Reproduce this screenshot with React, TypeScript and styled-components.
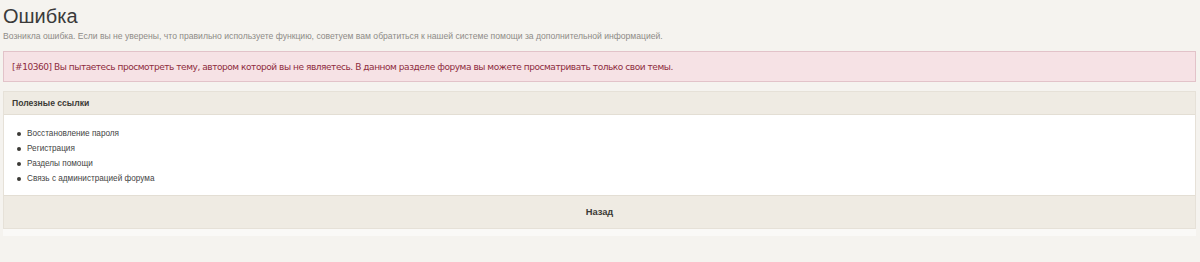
import React from 'react'
import styled, { createGlobalStyle } from 'styled-components'

const GlobalStyle = createGlobalStyle`
  html, body {
    margin: 0;
    padding: 0;
    background: #f5f3ef;
  }
  body {
    font-family: 'Liberation Sans', Arial, sans-serif;
  }
`

const Page = styled.div`
  padding: 4px 4px 0 3px;
`

const Title = styled.h1`
  margin: 0;
  font-size: 20px;
  font-weight: normal;
  line-height: 24px;
  color: #3a3a3a;
`

const Subtitle = styled.p`
  margin: 2px 0 0;
  font-size: 8.6px;
  line-height: 12px;
  color: #8e8b87;
`

const ErrorBox = styled.div`
  margin-top: 9px;
  height: 29px;
  display: flex;
  align-items: center;
  padding: 0 8px;
  background: #f6e2e5;
  border: 1px solid #e2c3c9;
  font-family: 'DejaVu Sans', Verdana, sans-serif;
  font-size: 9px;
  letter-spacing: -0.45px;
  color: #8e2c40;
`

const Panel = styled.div`
  margin-top: 9px;
  border: 1px solid #e6e1d8;
  background: #ffffff;
`

const PanelHeader = styled.div`
  height: 22px;
  display: flex;
  align-items: center;
  padding: 0 8px;
  background: #efebe3;
  border-bottom: 1px solid #e3ded4;
  font-size: 8.6px;
  font-weight: bold;
  color: #3b3a36;
`

const LinkList = styled.ul`
  margin: 0;
  padding: 11px 0 9px 23px;
  list-style: none;
  font-size: 8.2px;
  color: #444;
`

const LinkItem = styled.li`
  position: relative;
  height: 15px;
  line-height: 15px;

  &::before {
    content: '';
    position: absolute;
    left: -10px;
    top: 6px;
    width: 4px;
    height: 4px;
    border-radius: 50%;
    background: #3b3a36;
  }
`

const PanelFooter = styled.div`
  height: 32px;
  display: flex;
  align-items: center;
  justify-content: center;
  background: #efebe3;
  border-top: 1px solid #e3ded4;
  font-size: 9.3px;
  font-weight: bold;
  color: #3b3a36;
`

const Shadow = styled.div`
  height: 7px;
  background: #faf9f7;
`

const links = [
  'Восстановление пароля',
  'Регистрация',
  'Разделы помощи',
  'Связь с администрацией форума',
]

export default function App() {
  return (
    <Page>
      <GlobalStyle />
      <Title>Ошибка</Title>
      <Subtitle>
        Возникла ошибка. Если вы не уверены, что правильно используете функцию, советуем вам обратиться к нашей
        системе помощи за дополнительной информацией.
      </Subtitle>
      <ErrorBox>
        [#10360] Вы пытаетесь просмотреть тему, автором которой вы не являетесь. В данном разделе форума вы можете
        просматривать только свои темы.
      </ErrorBox>
      <Panel>
        <PanelHeader>Полезные ссылки</PanelHeader>
        <LinkList>
          {links.map((l) => (
            <LinkItem key={l}>{l}</LinkItem>
          ))}
        </LinkList>
        <PanelFooter>Назад</PanelFooter>
      </Panel>
      <Shadow />
    </Page>
  )
}
